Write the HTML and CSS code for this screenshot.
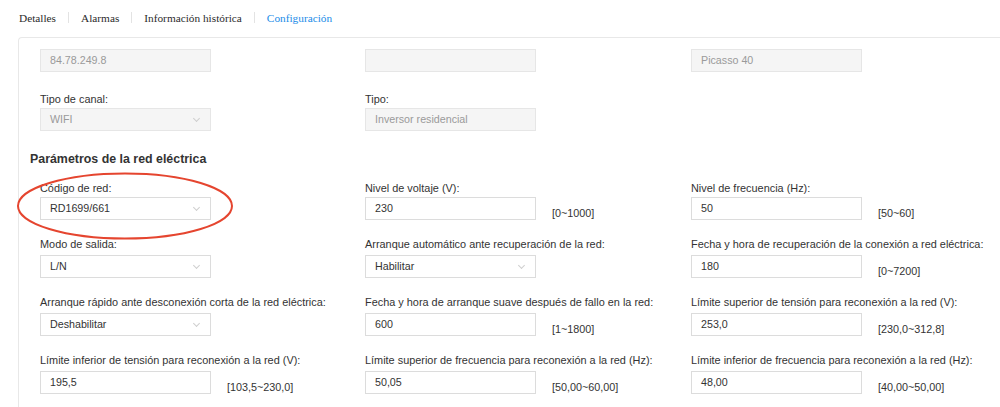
FILE: index.html
```html
<!DOCTYPE html>
<html lang="es">
<head>
<meta charset="utf-8">
<title>Configuración</title>
<link rel="stylesheet" href="styles.css">
</head>
<body>
<nav class="tabs">
  <span class="tab">Detalles</span><span class="sep"></span>
  <span class="tab">Alarmas</span><span class="sep"></span>
  <span class="tab">Información histórica</span><span class="sep"></span>
  <span class="tab active">Configuración</span>
</nav>
<div class="panel">
  <div class="grid">
    <div class="field nolabel"><div class="row"><div class="input disabled">84.78.249.8</div></div></div>
    <div class="field nolabel"><div class="row"><div class="input disabled"></div></div></div>
    <div class="field nolabel"><div class="row"><div class="input disabled">Picasso 40</div></div></div>

    <div class="field top"><div class="label">Tipo de canal:</div><div class="row"><div class="input disabled select">WIFI<span class="chev"></span></div></div></div>
    <div class="field top"><div class="label">Tipo:</div><div class="row"><div class="input disabled">Inversor residencial</div></div></div>
    <div class="field top"></div>
  </div>

  <h3 class="heading">Parámetros de la red eléctrica</h3>

  <div class="grid">
    <div class="field first"><div class="label">Código de red:</div><div class="row"><div class="input select">RD1699/661<span class="chev"></span></div></div></div>
    <div class="field first"><div class="label">Nivel de voltaje (V):</div><div class="row"><div class="input">230</div><span class="range">[0~1000]</span></div></div>
    <div class="field first"><div class="label">Nivel de frecuencia (Hz):</div><div class="row"><div class="input">50</div><span class="range">[50~60]</span></div></div>

    <div class="field"><div class="label">Modo de salida:</div><div class="row"><div class="input select">L/N<span class="chev"></span></div></div></div>
    <div class="field"><div class="label">Arranque automático ante recuperación de la red:</div><div class="row"><div class="input select">Habilitar<span class="chev"></span></div></div></div>
    <div class="field"><div class="label">Fecha y hora de recuperación de la conexión a red eléctrica:</div><div class="row"><div class="input">180</div><span class="range">[0~7200]</span></div></div>

    <div class="field"><div class="label">Arranque rápido ante desconexión corta de la red eléctrica:</div><div class="row"><div class="input select">Deshabilitar<span class="chev"></span></div></div></div>
    <div class="field"><div class="label">Fecha y hora de arranque suave después de fallo en la red:</div><div class="row"><div class="input">600</div><span class="range">[1~1800]</span></div></div>
    <div class="field"><div class="label">Límite superior de tensión para reconexión a la red (V):</div><div class="row"><div class="input">253,0</div><span class="range">[230,0~312,8]</span></div></div>

    <div class="field"><div class="label">Límite inferior de tensión para reconexión a la red (V):</div><div class="row"><div class="input">195,5</div><span class="range">[103,5~230,0]</span></div></div>
    <div class="field"><div class="label">Límite superior de frecuencia para reconexión a la red (Hz):</div><div class="row"><div class="input">50,05</div><span class="range">[50,00~60,00]</span></div></div>
    <div class="field"><div class="label">Límite inferior de frecuencia para reconexión a la red (Hz):</div><div class="row"><div class="input">48,00</div><span class="range">[40,00~50,00]</span></div></div>
  </div>
</div>
<svg class="circle" width="222" height="70" viewBox="0 0 222 70" aria-hidden="true">
  <ellipse cx="110" cy="34" rx="107" ry="32.5" fill="none" stroke="#e5452f" stroke-width="2"/>
</svg>
</body>
</html>
```

FILE: styles.css
```css
html, body {
  margin: 0;
  padding: 0;
  background: #fff;
}
body {
  font-family: "Liberation Sans", Arial, sans-serif;
  color: #333;
  position: relative;
  overflow: hidden;
  height: 407px;
}
.tabs {
  display: flex;
  align-items: center;
  height: 35px;
  padding-left: 19px;
  font-family: "Liberation Serif", "Times New Roman", serif;
  font-size: 11.3px;
  color: #2b2b2b;
}
.tab.active {
  color: #1a8ce8;
}
.sep {
  width: 1px;
  height: 11px;
  background: #e3e3e3;
  margin: 0 12px;
}
.panel {
  margin-left: 18px;
  margin-top: 2px;
  border-top: 1px solid #e8e8e8;
  border-left: 1px solid #e8e8e8;
  border-top-left-radius: 4px;
  padding: 11px 0 0 21px;
}
.grid {
  display: grid;
  grid-template-columns: 325px 326px 326px;
}
.field {
  margin-bottom: 16px;
}
.field.nolabel {
  margin-bottom: 19px;
}
.field.top {
  margin-bottom: 18px;
}
.label {
  font-size: 10.9px;
  line-height: 16px;
  height: 16px;
  margin-bottom: 3px;
  white-space: nowrap;
  color: #333;
}
.field.top .label,
.field.first .label {
  margin-bottom: 1px;
}
.row {
  display: flex;
  align-items: flex-end;
}
.input {
  box-sizing: border-box;
  width: 171px;
  height: 23px;
  border: 1px solid #dcdcdc;
  background: #fff;
  padding: 0 9px;
  font-size: 10.7px;
  line-height: 21px;
  color: #333;
  position: relative;
}
.input.disabled {
  background: #f5f5f5;
  border-color: #e6e6e6;
  color: #9a9a9a;
}
.chev {
  position: absolute;
  right: 11px;
  top: 7px;
  width: 4px;
  height: 4px;
  border-right: 1px solid #cfcfcf;
  border-bottom: 1px solid #cfcfcf;
  transform: rotate(45deg);
}
.range {
  margin-left: 16px;
  font-size: 10.8px;
  line-height: 16px;
  margin-bottom: -1px;
  color: #333;
}
.heading {
  margin: 0 0 11px -10px;
  font-size: 12.4px;
  font-weight: 600;
  line-height: 20px;
  color: #333;
}
.circle {
  position: absolute;
  left: 15px;
  top: 172px;
}
```
